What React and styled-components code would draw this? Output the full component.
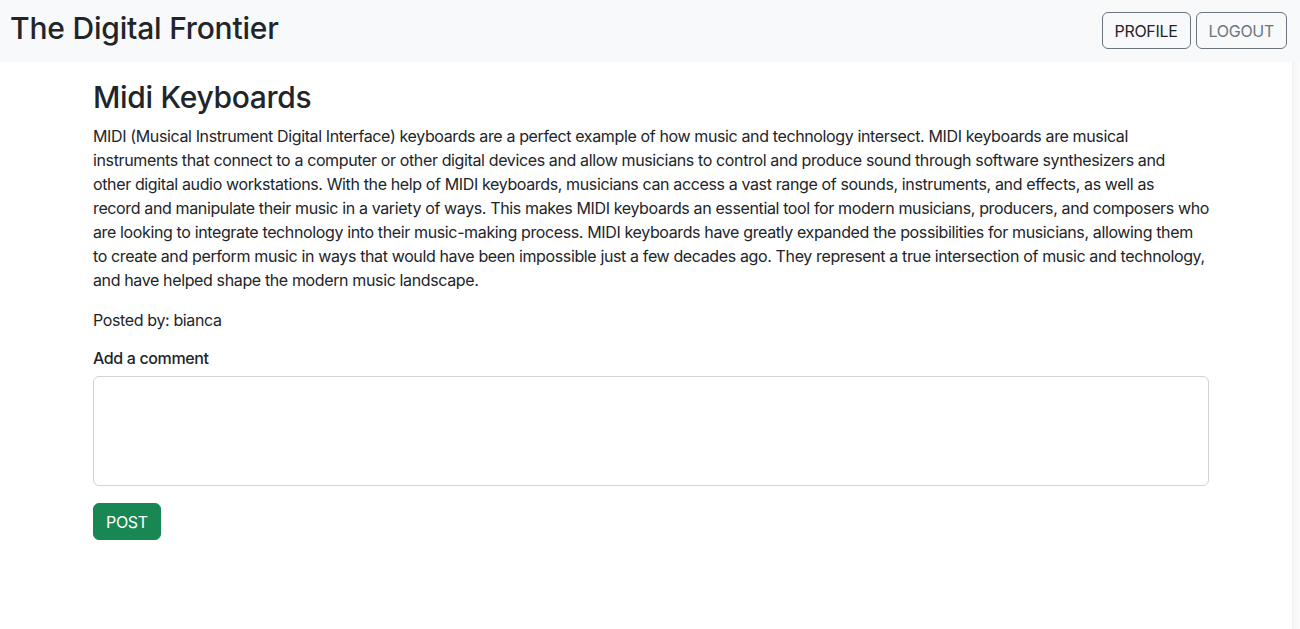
import React from "react";
import styled, { createGlobalStyle } from "styled-components";

const GlobalStyle = createGlobalStyle`
  * { box-sizing: border-box; }
  body {
    margin: 0;
    font-family: Inter, "Noto Sans", "Liberation Sans", sans-serif;
    font-size: 16px;
    line-height: 1.5;
    letter-spacing: -0.37px;
    color: #212529;
    background: #fff;
  }
`;

const NAVBAR = styled.nav`
  display: flex;
  align-items: center;
  justify-content: space-between;
  height: 62px;
  padding: 0 13px 0 10px;
  background: #f8f9fa;
`;

const BRAND = styled.h1`
  margin: 0 0 6px;
  font-size: 30px;
  font-weight: 500;
  line-height: 1.2;
  letter-spacing: -0.2px;
`;

const NAVACTIONS = styled.div`
  display: flex;
  gap: 5px;
  margin-top: -1px;
`;

const OUTLINEBUTTON = styled.button`
  height: 37px;
  padding: 0 12px;
  font-family: inherit;
  font-size: 16px;
  letter-spacing: -0.3px;
  color: ${(p) => (p.$muted ? "#6c757d" : "#212529")};
  background: transparent;
  border: 1px solid #6c757d;
  border-radius: 6px;
`;

const CONTAINER = styled.main`
  max-width: 1116px;
  margin: 16px 0 0 93px;
`;

const TITLE = styled.h2`
  margin: 0 0 8px;
  font-size: 30px;
  font-weight: 500;
  line-height: 38px;
  letter-spacing: -0.3px;
`;

const BODY = styled.p`
  margin: 0 0 16px;
`;

const POSTED = styled.p`
  margin: 0 0 14px;
`;

const LABEL = styled.label`
  display: block;
  margin-bottom: 6px;
  font-weight: 500;
`;

const TEXTAREA = styled.textarea`
  display: block;
  width: 100%;
  height: 110px;
  padding: 6px 12px;
  font-family: inherit;
  font-size: 16px;
  border: 1px solid #ced4da;
  border-radius: 6px;
  resize: none;
`;

const POSTBUTTON = styled.button`
  margin-top: 17px;
  height: 37px;
  padding: 0 12px;
  font-family: inherit;
  font-size: 16px;
  letter-spacing: -0.3px;
  color: #fff;
  background: #198754;
  border: 1px solid #198754;
  border-radius: 6px;
`;

const SCROLLTRACK = styled.div`
  position: fixed;
  top: 62px;
  right: 0;
  bottom: 0;
  width: 8px;
  background: linear-gradient(to right, #f5f5f5, #fbfbfb);
  border-left: 1px solid #f1f1f1;
`;

const lines = [
  "MIDI (Musical Instrument Digital Interface) keyboards are a perfect example of how music and technology intersect. MIDI keyboards are musical",
  "instruments that connect to a computer or other digital devices and allow musicians to control and produce sound through software synthesizers and",
  "other digital audio workstations. With the help of MIDI keyboards, musicians can access a vast range of sounds, instruments, and effects, as well as",
  "record and manipulate their music in a variety of ways. This makes MIDI keyboards an essential tool for modern musicians, producers, and composers who",
  "are looking to integrate technology into their music-making process. MIDI keyboards have greatly expanded the possibilities for musicians, allowing them",
  "to create and perform music in ways that would have been impossible just a few decades ago. They represent a true intersection of music and technology,",
  "and have helped shape the modern music landscape.",
];

export default function App() {
  return (
    <>
      <GlobalStyle />
      <NAVBAR>
        <BRAND>The Digital Frontier</BRAND>
        <NAVACTIONS>
          <OUTLINEBUTTON>PROFILE</OUTLINEBUTTON>
          <OUTLINEBUTTON $muted>LOGOUT</OUTLINEBUTTON>
        </NAVACTIONS>
      </NAVBAR>
      <CONTAINER>
        <TITLE>Midi Keyboards</TITLE>
        <BODY>
          {lines.map((line, i) => (
            <React.Fragment key={i}>
              {line}
              {i < lines.length - 1 && <br />}
            </React.Fragment>
          ))}
        </BODY>
        <POSTED>Posted by: bianca</POSTED>
        <LABEL htmlFor="comment">Add a comment</LABEL>
        <TEXTAREA id="comment" />
        <POSTBUTTON>POST</POSTBUTTON>
      </CONTAINER>
      <SCROLLTRACK />
    </>
  );
}
